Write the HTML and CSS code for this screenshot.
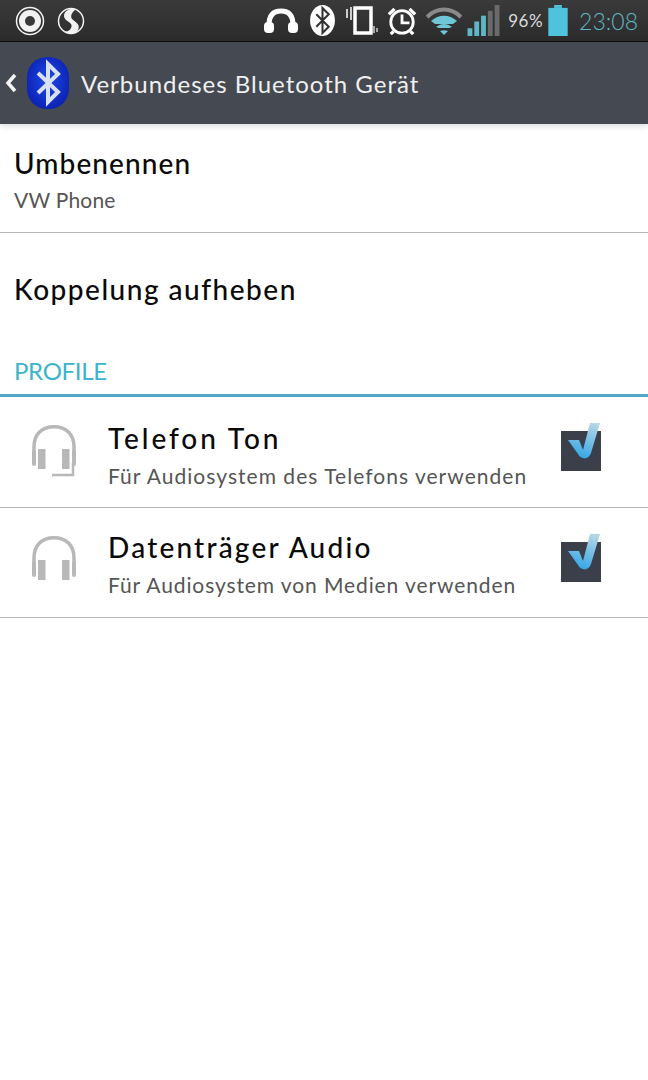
FILE: index.html
```html
<!DOCTYPE html>
<html lang="de">
  <head>
    <meta charset="UTF-8" />
    <meta name="viewport" content="width=device-width, initial-scale=1" />
    <title>Verbundeses Bluetooth Gerät</title>
    <link rel="stylesheet" href="styles.css">
  </head>
  <body>
    <svg class="sprites" width="0" height="0">
      <symbol id="headset" viewBox="0 0 44 54">
        <path d="M2 32V22C2 9 10 1.800 22 1.800S42 9 42 22v10" fill="none" stroke="#b8b8b8" stroke-width="3.500"/>
        <rect x="0" y="25" width="4" height="16" rx="2" fill="#b8b8b8"/>
        <rect x="40" y="25" width="4" height="16" rx="2" fill="#b8b8b8"/>
        <rect x="6" y="24" width="7.500" height="20" fill="#b8b8b8"/>
        <rect x="30" y="24" width="7.500" height="20" fill="#b8b8b8"/>
      </symbol>
      <symbol id="check" viewBox="0 0 42 48">
        <rect x="0" y="8" width="40" height="40" fill="#3a3f49"/>
        <path d="M7 17h11l4 10L29 0h10L30 30c-2 7-10 7-13 1z" fill="url(#checkFill)"/>
      </symbol>
      <linearGradient id="checkFill" x1="0.7" y1="0" x2="0.4" y2="1">
        <stop offset="0" stop-color="#b4d6e6"/>
        <stop offset="1" stop-color="#33a6e6"/>
      </linearGradient>
    </svg>

    <header class="status-bar">
      <div class="status-left">
        <svg width="30" height="30" viewBox="0 0 30 30">
          <circle cx="15" cy="15" r="13.5" fill="none" stroke="#f2f2f2" stroke-width="1.5"/>
          <circle cx="15" cy="15" r="11" fill="#f2f2f2"/>
          <circle cx="15" cy="15" r="5" fill="#3a3a3a"/>
        </svg>
        <svg width="28" height="28" viewBox="0 0 28 28">
          <circle cx="14" cy="14" r="12.5" fill="none" stroke="#f2f2f2" stroke-width="1.5"/>
          <path d="M19 2C9 0 4 8 9 13c4 3 7 4 5 8-1 3-5 4-7 3 6 4 12 3 14-1 3-6-3-8-6-11-2-3 0-7 4-10z" fill="#f2f2f2"/>
        </svg>
      </div>
      <div class="status-right">
        <svg class="icon-headphones" width="36" height="26" viewBox="0 0 36 26">
          <path d="M6 22V17C6 8 10 3 18 3s12 5 12 14v5" fill="none" stroke="#fff" stroke-width="5"/>
          <rect x="1" y="14" width="10" height="11" rx="4" fill="#fff"/>
          <rect x="25" y="14" width="10" height="11" rx="4" fill="#fff"/>
        </svg>
        <svg class="icon-bt" width="25" height="31" viewBox="0 0 24 30">
          <ellipse cx="12" cy="15" rx="12" ry="15" fill="#fff"/>
          <path d="M6 9l12 12-6 6V3l6 6L6 21" fill="none" stroke="#333" stroke-width="2"/>
        </svg>
        <svg class="icon-vibrate" width="32" height="29" viewBox="0 0 32 29">
          <rect x="9" y="2" width="16" height="25" fill="none" stroke="#fff" stroke-width="3.500"/>
          <path d="M1 3v9M5 1v13" stroke="#ccc" stroke-width="2"/>
          <path d="M28 20v7M31 22v4" stroke="#ccc" stroke-width="1.500"/>
        </svg>
        <svg class="icon-alarm" width="32" height="30" viewBox="0 0 32 32">
          <circle cx="16" cy="17" r="12" fill="none" stroke="#fff" stroke-width="3"/>
          <path d="M16 9v9h8" fill="none" stroke="#fff" stroke-width="3"/>
          <path d="M2 9l6-6M30 9l-6-6M7 27l-3 3M25 27l3 3" stroke="#fff" stroke-width="3.500"/>
        </svg>
        <svg class="icon-wifi" width="36" height="29" viewBox="0 0 36 29">
          <path d="M1 11C11 1 25 1 35 11" fill="none" stroke="#8a8a8a" stroke-width="4"/>
          <path d="M5 15c8-7 18-7 26 0l-4 3H9z" fill="#6fc6d6"/>
          <path d="M10 21c5-4 11-4 16 0l-3 1H13z" fill="#6fc6d6"/>
          <path d="M14 25c3-1 5-1 8 0l-4 4z" fill="#6fc6d6"/>
        </svg>
        <svg class="icon-signal" width="33" height="31" viewBox="0 0 33 32">
          <rect x="0" y="24" width="5" height="8" fill="#5fb6c6"/>
          <rect x="7" y="17" width="5" height="15" fill="#5fb6c6"/>
          <rect x="14" y="11" width="5" height="21" fill="#5fb6c6"/>
          <rect x="21" y="6" width="5" height="26" fill="#6a6a6a"/>
          <rect x="28" y="0" width="5" height="32" fill="#6a6a6a"/>
        </svg>
        <span class="battery-text">96%</span>
        <svg class="icon-battery" width="20" height="31" viewBox="0 0 20 32">
          <rect x="6" y="0" width="8" height="3" fill="#4fc3dc"/>
          <rect x="0" y="3" width="20" height="29" fill="#4fc3dc"/>
        </svg>
        <span class="clock">23:08</span>
      </div>
    </header>

    <div class="action-bar">
      <svg class="back" width="12" height="20" viewBox="0 0 12 20">
        <path d="M10 2L3 10l7 8" fill="none" stroke="#f4f4f4" stroke-width="3.500"/>
      </svg>
      <svg width="44" height="54" viewBox="0 0 44 54">
        <defs>
          <radialGradient id="btBlue" cx="0.5" cy="0.45" r="0.6">
            <stop offset="0" stop-color="#1e4ae8"/>
            <stop offset="1" stop-color="#0a1fb0"/>
          </radialGradient>
        </defs>
        <rect x="1" y="1" width="42" height="52" rx="20" fill="url(#btBlue)"/>
        <path d="M12 17l20 19-10 10V8l10 10-20 19" fill="none" stroke="#d8e0f5" stroke-width="4"/>
      </svg>
      <h1 class="page-title">Verbundeses Bluetooth Gerät</h1>
    </div>

    <main>
      <div class="row row-rename">
        <div class="row-title">Umbenennen</div>
        <div class="row-sub row-sub-short">VW Phone</div>
      </div>
      <div class="row-unpair">
        <div class="row-title row-title-unpair">Koppelung aufheben</div>
      </div>
      <h2 class="section-title">PROFILE</h2>

      <div class="profile">
        <div class="profile-icon">
          <svg width="44" height="54"><use href="#headset"/><path d="M41 38v12H20" fill="none" stroke="#b8b8b8" stroke-width="2.500"/></svg>
        </div>
        <div class="profile-text">
          <div class="row-title profile-title-phone">Telefon Ton</div>
          <div class="row-sub row-sub-phone">Für Audiosystem des Telefons verwenden</div>
        </div>
        <svg class="checkbox" width="42" height="48"><use href="#check"/></svg>
      </div>
      <div class="profile profile-media">
        <div class="profile-icon">
          <svg width="44" height="54"><use href="#headset"/></svg>
        </div>
        <div class="profile-text">
          <div class="row-title profile-title-media">Datenträger Audio</div>
          <div class="row-sub">Für Audiosystem von Medien verwenden</div>
        </div>
        <svg class="checkbox" width="42" height="48"><use href="#check"/></svg>
      </div>
    </main>
  </body>
</html>
```

FILE: styles.css
```css
body {
  margin: 0;
  font-family: "Lato", "Noto Sans", sans-serif;
  background-color: #fff;
  color: #111;
}

.sprites {
  display: block;
  height: 0;
}

.status-bar {
  height: 41px;
  display: flex;
  align-items: center;
  justify-content: space-between;
  background: linear-gradient(#3a3a3a, #2b2b2b);
  border-bottom: 1px solid #0c0c0c;
  padding: 0 10px 0 15px;
}

.status-left,
.status-right {
  display: flex;
  align-items: center;
}

.status-left {
  gap: 12px;
}

.icon-bt {
  margin-left: 11px;
}

.icon-vibrate {
  margin-left: 11px;
}

.icon-alarm {
  margin-left: 8px;
}

.icon-wifi {
  margin-left: 8px;
}

.icon-signal {
  margin-left: 5px;
}

.battery-text {
  color: #ddd;
  font-size: 17px;
  letter-spacing: 0.5px;
  margin-left: 8px;
}

.icon-battery {
  margin-left: 5px;
}

.clock {
  color: #5fb6c6;
  font-size: 23px;
  font-weight: 300;
  margin-left: 11px;
}

.action-bar {
  height: 82px;
  display: flex;
  align-items: center;
  padding-left: 5px;
  background-color: #454a52;
  box-shadow: 0 2px 6px rgba(0, 0, 0, 0.15);
}

.back {
  margin-right: 9px;
}

.page-title {
  margin: 0 0 0 11px;
  font-size: 24px;
  font-weight: 400;
  letter-spacing: 1px;
  color: #f0f0f0;
}

.row-title {
  font-size: 28px;
  font-weight: 500;
  letter-spacing: 1.1px;
  line-height: 34px;
  color: #0a0a0a;
}

.row-title-unpair {
  letter-spacing: 1.5px;
}

.profile-title-phone {
  letter-spacing: 2.9px;
}

.profile-title-media {
  letter-spacing: 2.2px;
}

.row-sub {
  font-size: 21px;
  line-height: 26px;
  letter-spacing: 0.9px;
  color: #555;
  margin-top: 8px;
}

.row-sub-phone {
  letter-spacing: 1.03px;
}

.row-sub-short {
  letter-spacing: 0.2px;
  margin-top: 7px;
}

.row-rename {
  height: 109px;
  box-sizing: border-box;
  padding: 22px 0 0 14px;
  border-bottom: 1px solid #b4b8b8;
}

.row-unpair {
  height: 112px;
  box-sizing: border-box;
  padding: 39px 0 0 14px;
}

.section-title {
  margin: 0;
  height: 52px;
  box-sizing: border-box;
  padding: 12px 0 0 14px;
  font-size: 24px;
  line-height: 28px;
  font-weight: 400;
  letter-spacing: -0.3px;
  color: #3db3cc;
  border-bottom: 3px solid #4fa8c8;
}

.profile {
  height: 110px;
  display: flex;
  align-items: center;
  border-bottom: 1px solid #b4b8b8;
}

.profile-media {
  height: 109px;
}

.profile-icon {
  width: 108px;
  padding-left: 32px;
  box-sizing: border-box;
  display: flex;
}

.profile-text {
  flex: 1;
  padding-top: 6px;
}

.profile-media .profile-text {
  padding-top: 3px;
}

.checkbox {
  margin: 0 45px 10px 0;
}
```
